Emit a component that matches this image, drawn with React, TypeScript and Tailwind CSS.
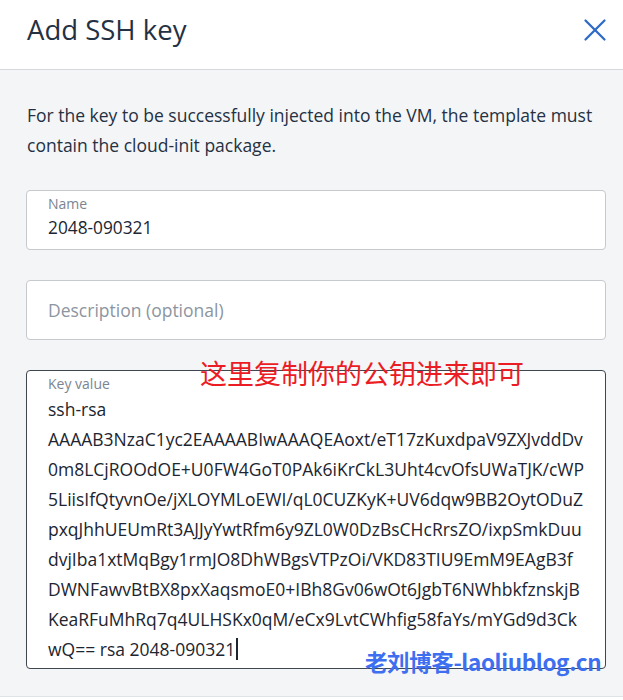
import { X } from 'lucide-react';

const keyLines = [
  'ssh-rsa',
  'AAAAB3NzaC1yc2EAAAABIwAAAQEAoxt/eT17zKuxdpaV9ZXJvddDv',
  '0m8LCjROOdOE+U0FW4GoT0PAk6iKrCkL3Uht4cvOfsUWaTJK/cWP',
  '5LiisIfQtyvnOe/jXLOYMLoEWI/qL0CUZKyK+UV6dqw9BB2OytODuZ',
  'pxqJhhUEUmRt3AJJyYwtRfm6y9ZL0W0DzBsCHcRrsZO/ixpSmkDuu',
  'dvjIba1xtMqBgy1rmJO8DhWBgsVTPzOi/VKD83TIU9EmM9EAgB3f',
  'DWNFawvBtBX8pxXaqsmoE0+IBh8Gv06wOt6JgbT6NWhbkfznskjB',
  'KeaRFuMhRq7q4ULHSKx0qM/eCx9LvtCWhfig58faYs/mYGd9d3Ck',
];

export default function App() {
  return (
    <div className="w-[623px] h-[700px] flex flex-col bg-[#f4f5f7] overflow-hidden font-['Open_Sans',sans-serif] text-[#243143]">
      {/* header */}
      <div className="h-[70px] shrink-0 bg-white border-b border-[#d5d9de] flex items-center justify-between pl-[27px] pr-[8px]">
        <h1 className="text-[27.5px] leading-none text-[#243143] -mt-[10px]">Add SSH key</h1>
        <button className="w-[40px] h-[40px] flex items-center justify-center text-[#2e6bc6] -mt-[9px]">
          <X size={38} strokeWidth={1.45} />
        </button>
      </div>

      {/* body */}
      <div className="flex-1 flex flex-col pl-[26px] pr-[17px] pt-[30px] border-b border-[#dfe2e6]">
        <p className="text-[17.5px] leading-[30px] pl-[1px]">
          For the key to be successfully injected into the VM, the template must contain the cloud-init package.
        </p>

        <div className="mt-[30px] h-[60px] bg-white border border-[#c6c9ce] rounded-[4px] pl-[21px] pt-[3px]">
          <div className="text-[14px] leading-[20px] text-[#7b8591]">Name</div>
          <div className="text-[17.3px] leading-[28px] text-[#1c2530]">2048-090321</div>
        </div>

        <div className="mt-[30px] h-[60px] bg-white border border-[#c6c9ce] rounded-[4px] pl-[21px] flex items-center">
          <span className="text-[17.5px] text-[#8c95a0]">Description (optional)</span>
        </div>

        <div className="relative mt-[30px] h-[299px] bg-white border border-[#3e4650] rounded-[4px] pl-[21px] pt-[3px]">
          <div className="text-[14px] leading-[20px] text-[#7b8591]">Key value</div>
          <div className="text-[17.5px] leading-[30px] text-[#1c2530]">
            {keyLines.map((l) => (
              <div key={l}>{l}</div>
            ))}
            <div className="flex items-center">
              wQ== rsa 2048-090321
              <span className="inline-block w-[2px] h-[22px] bg-[#1c2530] ml-[1px]" />
            </div>
          </div>

          {/* watermarks over the field */}
          <div className="absolute left-[173px] -top-[12px] text-[27px] leading-none text-[#ec1c24] font-['Noto_Sans_CJK_SC',sans-serif]">
            这里复制你的公钥进来即可
          </div>
          <div className="absolute left-[338px] top-[279px] text-[22.5px] leading-none font-bold text-[#3d6ff0] font-['Noto_Sans_CJK_SC',sans-serif] tracking-[-0.4px]">
            老刘博客-laoliublog.cn
          </div>
        </div>
      </div>
      <div className="h-[3px] shrink-0 bg-white" />
    </div>
  );
}
